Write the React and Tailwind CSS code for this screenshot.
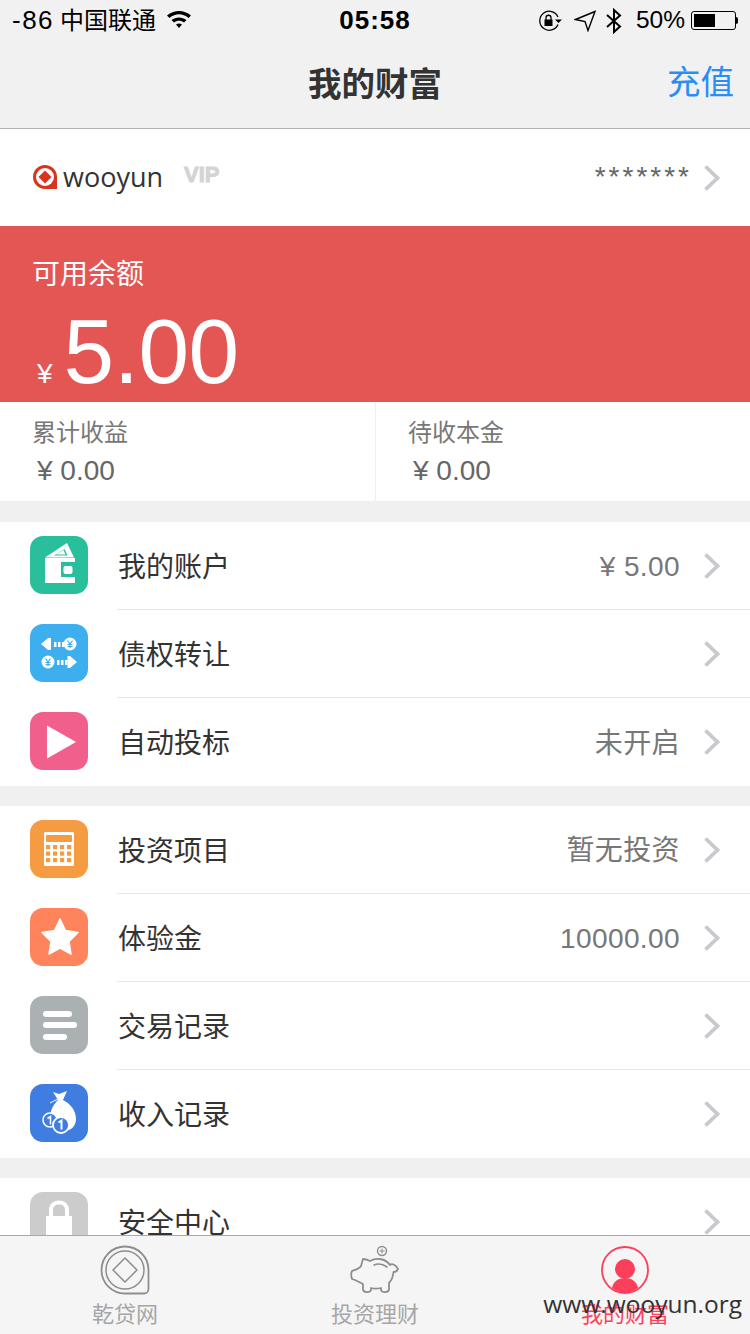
const CJK = '[font-family:"Liberation_Sans","Noto_Sans_CJK_SC",sans-serif]';

function Chevron() {
  return (
    <svg width="18" height="28" viewBox="0 0 18 28" className="shrink-0">
      <path d="M2.5 2.5 L14.5 14 L2.5 25.5" fill="none" stroke="#c8c8cd" strokeWidth="3.8" />
    </svg>
  );
}

function WalletIcon() {
  return (
    <svg width="58" height="58" viewBox="0 0 58 58">
      <path d="M15 21.500 L37 7 L44 21.500 Z" fill="#fff" />
      <path d="M24 19.500 L34.500 13 L37.500 19.500 Z" fill="#2abf9c" />
      <path d="M26 18.500 L33.500 14 L35.500 18.500 Z" fill="#fff" />
      <rect x="15" y="22" width="30" height="25" fill="#fff" />
      <rect x="31" y="26" width="14" height="15" fill="#2abf9c" />
      <rect x="33.500" y="30" width="9" height="8" rx="2" fill="#fff" />
    </svg>
  );
}

function TransferIcon() {
  return (
    <svg width="58" height="58" viewBox="0 0 58 58">
      <path d="M11 20 L18 14 H21 V26 H18 Z" fill="#fff" />
      <rect x="24" y="18" width="2.500" height="5" fill="#fff" />
      <rect x="28" y="18" width="2.500" height="5" fill="#fff" />
      <rect x="32" y="18" width="2.500" height="5" fill="#fff" />
      <circle cx="40" cy="20" r="6.500" fill="#fff" />
      <path d="M37.500 16.500 L40 20 L42.500 16.500 M40 20 V24 M37.500 20.500 H42.500 M37.500 22.500 H42.500" stroke="#3daeee" strokeWidth="1.200" fill="none" />
      <circle cx="18" cy="38" r="6.500" fill="#fff" />
      <path d="M15.500 34.500 L18 38 L20.500 34.500 M18 38 V42 M15.500 38.500 H20.500 M15.500 40.500 H20.500" stroke="#3daeee" strokeWidth="1.200" fill="none" />
      <rect x="27" y="36" width="2.500" height="5" fill="#fff" />
      <rect x="31" y="36" width="2.500" height="5" fill="#fff" />
      <rect x="35" y="36" width="2.500" height="5" fill="#fff" />
      <path d="M47 38 L40 32 H37.500 V44 H40 Z" fill="#fff" />
    </svg>
  );
}

function PlayIcon() {
  return (
    <svg width="58" height="58" viewBox="0 0 58 58">
      <path d="M17 13.500 L46 30 L17 46.500 Z" fill="#fff" />
    </svg>
  );
}

function CalcIcon() {
  const cells = [];
  for (let r = 0; r < 3; r++) {
    for (let c = 0; c < 4; c++) {
      cells.push(<rect key={`${r}-${c}`} x={16 + c * 7} y={25 + r * 6.5} width="4.200" height="4.200" fill="#f59b41" />);
    }
  }
  return (
    <svg width="58" height="58" viewBox="0 0 58 58">
      <rect x="14" y="12" width="30" height="34" rx="1.500" fill="#fff" />
      <rect x="16" y="15" width="26" height="7" rx="1" fill="#f59b41" />
      {cells}
    </svg>
  );
}

function StarIcon() {
  return (
    <svg width="58" height="58" viewBox="0 0 58 58">
      <path d="M30 11 L35.500 22.500 L48 24.500 L39 33.500 L41 46 L30 40 L19 46 L21 33.500 L12 24.500 L24.500 22.500 Z" fill="#fff" stroke="#fff" strokeWidth="1.500" strokeLinejoin="round" />
    </svg>
  );
}

function ListIcon() {
  return (
    <svg width="58" height="58" viewBox="0 0 58 58">
      <rect x="13" y="15" width="29" height="6" rx="3" fill="#fff" />
      <rect x="13" y="26" width="34" height="6" rx="3" fill="#fff" />
      <rect x="13" y="38" width="24" height="6" rx="3" fill="#fff" />
    </svg>
  );
}

function BagIcon() {
  return (
    <svg width="58" height="58" viewBox="0 0 58 58">
      <path d="M23 8 L29 10 L37 7 L33 16 C41 20 46 27 46 35 C46 42 41 47 34 47 L20 34 C20 26 24 20 28 16 Z" fill="#fff" />
      <path d="M20 19 L28 15" stroke="#fff" strokeWidth="1" />
      <circle cx="20" cy="36" r="7" fill="#3f7de0" stroke="#fff" strokeWidth="1.600" />
      <path d="M17.500 34.500 L20.500 32.500 V40.500" stroke="#fff" strokeWidth="1.600" fill="none" />
      <circle cx="31" cy="41" r="8" fill="#3f7de0" stroke="#fff" strokeWidth="1.800" />
      <path d="M28.500 38.500 L31.500 36.500 V45.500" stroke="#fff" strokeWidth="2" fill="none" />
    </svg>
  );
}

function LockIcon() {
  return (
    <svg width="58" height="58" viewBox="0 0 58 58">
      <path d="M21 26 V18 C21 8 37 8 37 18 V26" fill="none" stroke="#fff" strokeWidth="4" />
      <rect x="16" y="24" width="26" height="30" fill="#fff" />
    </svg>
  );
}

function ListRow({ bg, icon, label, value, last }) {
  return (
    <div className="flex h-[88px] items-center pl-[30px]">
      <div className={`mb-[2px] flex h-[58px] w-[58px] shrink-0 items-center justify-center overflow-hidden rounded-[13px] ${bg}`}>
        {icon}
      </div>
      <div className={`ml-[29px] flex h-full flex-1 items-center pr-[29px] ${last ? '' : 'border-b border-[#e8e8e8]'}`}>
        <span className="flex-1 pl-[1px] pt-[4px] text-[28px] text-[#333]">{label}</span>
        {value && <span className="mr-[23px] pt-[3px] text-[28px] tracking-[0.4px] text-[#777]">{value}</span>}
        <Chevron />
      </div>
    </div>
  );
}

function StatusBar() {
  return (
    <div className="flex h-[40px] items-center justify-between pl-[12px] pr-[12px] pt-[1px] text-[25px] text-black">
      <div className="flex w-[260px] items-center">
        <span className="text-[26px] tracking-[1.500px]">-86</span>
        <span className="ml-[6px] text-[24px]">中国联通</span>
        <svg width="26" height="20" viewBox="0 0 26 20" className="ml-[10px] mb-[3px]">
          <path d="M1 6.500 C8 0.500 18 0.500 25 6.500 L22.500 9 C16.500 4 9.500 4 3.500 9 Z" />
          <path d="M5.500 11 C10 7.500 16 7.500 20.500 11 L18 13.500 C15 11 11 11 8 13.500 Z" />
          <path d="M10 15.500 C12 14 14 14 16 15.500 L13 19 Z" />
        </svg>
      </div>
      <span className="text-[26px] font-semibold tracking-[1px]">05:58</span>
      <div className="flex w-[260px] items-center justify-end">
        <svg width="24" height="22" viewBox="0 0 24 22">
          <path d="M20 14.500 A9.500 9.500 0 1 1 20 7" fill="none" stroke="#000" strokeWidth="1.300" />
          <path d="M17 9.500 H24 L20.500 13 Z" />
          <rect x="6.500" y="9.500" width="8" height="6.500" />
          <path d="M8 10 V7.500 C8 4.500 13 4.500 13 7.500 V10" fill="none" stroke="#000" strokeWidth="1.300" />
        </svg>
        <svg width="22" height="22" viewBox="0 0 22 22" className="ml-[12px]">
          <path d="M21 1.500 L1.500 9.500 L11 11.500 L14 20.500 Z" fill="none" stroke="#000" strokeWidth="1.400" strokeLinejoin="miter" />
        </svg>
        <svg width="18" height="26" viewBox="0 0 18 26" className="ml-[9px]">
          <path d="M2 7 L15 18.500 L9 24 V2 L15 7.500 L2 19" fill="none" stroke="#000" strokeWidth="2" />
        </svg>
        <span className="ml-[13px] text-[24.500px]">50%</span>
        <div className="ml-[6px] flex items-center">
          <div className="h-[19px] w-[45px] rounded-[3px] border border-black p-[2px]">
            <div className="h-full w-[21px] bg-black" />
          </div>
          <div className="h-[7px] w-[2px] rounded-r-[2px] bg-black" />
        </div>
      </div>
    </div>
  );
}

function LogoMark() {
  return (
    <svg width="26" height="26" viewBox="0 0 26 26" className="mb-[2px]">
      <path d="M13 1 C6.400 1 1 6.400 1 13 C1 19.600 6.400 25 13 25 H25 V13 C25 6.400 19.600 1 13 1 Z" fill="#d9341f" />
      <circle cx="13" cy="13" r="9" fill="#fff" />
      <path d="M13 6.500 L19.500 13 L13 19.500 L6.500 13 Z" fill="#d9341f" />
    </svg>
  );
}

function TabHomeIcon() {
  return (
    <svg width="50" height="50" viewBox="0 0 50 50">
      <path d="M25 1.500 C12 1.500 1.500 12 1.500 25 C1.500 38 12 48.500 25 48.500 H44 C46.500 48.500 48.500 46.500 48.500 44 V25 C48.500 12 38 1.500 25 1.500 Z" fill="none" stroke="#8e8e8e" strokeWidth="1.800" />
      <circle cx="25" cy="25" r="19" fill="none" stroke="#8e8e8e" strokeWidth="1.500" />
      <path d="M25 13 L37 25 L25 37 L13 25 Z" fill="none" stroke="#8e8e8e" strokeWidth="1.500" strokeLinejoin="round" />
    </svg>
  );
}

function TabPigIcon() {
  return (
    <svg width="50" height="50" viewBox="0 0 50 50">
      <circle cx="32" cy="6" r="4.500" fill="none" stroke="#8e8e8e" strokeWidth="1.400" />
      <path d="M29.500 6 H34.500 M32 3.500 V8.500" stroke="#8e8e8e" strokeWidth="1" />
      <path d="M13 14 C16 14 18 15 20 16 C27 12 36 14 40 20 C42 18 46 20 48 24 C47 27 45 27 43.500 27 C43 32 41 36 39 38 V44 C39 48 32 48 31 45 V43 C27 44 24 44 21 43 V45 C20 48 13 48 13 44 V39 C9 37 6 35 2 34 C1 31 1 28 2 26 C5 25 9 24 11 21 Z" fill="none" stroke="#8e8e8e" strokeWidth="1.800" strokeLinejoin="round" />
      <path d="M24 20 C29 18 33 19 37 22" fill="none" stroke="#8e8e8e" strokeWidth="1.600" strokeLinecap="round" />
    </svg>
  );
}

function TabUserIcon() {
  return (
    <svg width="50" height="50" viewBox="0 0 50 50">
      <circle cx="25" cy="25" r="23" fill="none" stroke="#fd3f5b" strokeWidth="1.800" />
      <circle cx="25" cy="24" r="10" fill="#fd3f5b" />
      <path d="M12 43 C13 37 18 33 25 33 C32 33 37 37 38 43 C31 49 19 49 12 43 Z" fill="#fd3f5b" />
    </svg>
  );
}

export default function App() {
  return (
    <div className={`relative flex h-[1334px] w-[750px] flex-col overflow-hidden bg-[#f0f0f0] ${CJK}`}>
      <div className="shrink-0 border-b border-[#b2b2b2] bg-[#f1f1f1]">
        <StatusBar />
        <div className="relative flex h-[88px] items-center justify-center">
          <span className="pt-[2px] text-[33.500px] font-semibold text-[#333]">我的财富</span>
          <span className="absolute right-[16px] top-[21px] text-[33.500px] leading-[44px] text-[#2a8cf5]">充值</span>
        </div>
      </div>

      <div className="min-h-0 flex-1 overflow-hidden">
        {/* Account */}
        <div className="flex h-[97px] items-center bg-white pl-[32px] pr-[29px]">
          <LogoMark />
          <span className="ml-[5px] text-[27px] text-[#333] [font-family:'Open_Sans',sans-serif]">wooyun</span>
          <span className="ml-[21px] mb-[6px] text-[22px] font-bold leading-none text-[#d4d4d4] [-webkit-text-stroke:1px_#d4d4d4]">VIP</span>
          <span className="ml-auto mr-[11px] mb-[2px] text-[28px] tracking-[3px] text-[#666]">*******</span>
          <Chevron />
        </div>

        {/* Balance */}
        <div className="h-[176px] overflow-hidden bg-[#e35654] pl-[32px] text-white">
          <div className="pt-[31px] text-[28px] leading-[36px]">可用余额</div>
          <div className="mt-[4px] flex items-baseline">
            <span className="ml-[5px] text-[28px]">¥</span>
            <span className="ml-[11px] text-[91px] leading-[110px] tracking-[-0.500px]">5.00</span>
          </div>
        </div>

        {/* Totals */}
        <div className="flex h-[99px] bg-white">
          <div className="w-[376px] border-r border-[#efefef] pl-[32px] pt-[13px]">
            <div className="text-[24px] leading-[36px] text-[#777]">累计收益</div>
            <div className="mt-[1px] pl-[5px] text-[28px] leading-[38px] text-[#666]">¥ 0.00</div>
          </div>
          <div className="flex-1 pl-[32px] pt-[13px]">
            <div className="text-[24px] leading-[36px] text-[#777]">待收本金</div>
            <div className="mt-[1px] pl-[5px] text-[28px] leading-[38px] text-[#666]">¥ 0.00</div>
          </div>
        </div>

        <div className="mt-[21px] bg-white">
          <ListRow bg="bg-[#2abf9c]" icon={<WalletIcon />} label="我的账户" value="¥ 5.00" />
          <ListRow bg="bg-[#3daeee]" icon={<TransferIcon />} label="债权转让" />
          <ListRow bg="bg-[#f15f8c]" icon={<PlayIcon />} label="自动投标" value="未开启" last />
        </div>

        <div className="mt-[20px] bg-white">
          <ListRow bg="bg-[#f59b41]" icon={<CalcIcon />} label="投资项目" value="暂无投资" />
          <ListRow bg="bg-[#ff845c]" icon={<StarIcon />} label="体验金" value="10000.00" />
          <ListRow bg="bg-[#abb1b3]" icon={<ListIcon />} label="交易记录" />
          <ListRow bg="bg-[#3f7de0]" icon={<BagIcon />} label="收入记录" last />
        </div>

        <div className="mt-[20px] bg-white">
          <ListRow bg="bg-[#cccccc]" icon={<LockIcon />} label="安全中心" last />
        </div>
      </div>

      {/* Tab bar */}
      <div className="grid h-[99px] shrink-0 grid-cols-3 border-t border-[#a9a9a9] bg-[#f5f5f5]">
        <div className="flex flex-col items-center pt-[9px]">
          <TabHomeIcon />
          <span className="mt-[5px] text-[22px] leading-[30px] text-[#a6a6a6]">乾贷网</span>
        </div>
        <div className="flex flex-col items-center pt-[9px]">
          <TabPigIcon />
          <span className="mt-[5px] text-[22px] leading-[30px] text-[#a6a6a6]">投资理财</span>
        </div>
        <div className="flex flex-col items-center pt-[9px]">
          <TabUserIcon />
          <span className="mt-[5px] text-[22px] leading-[30px] text-[#fd3f5b]">我的财富</span>
        </div>
      </div>

      {/* watermark */}
      <span className="absolute right-[8px] top-[1287px] text-[24.500px] leading-[34px] text-[#333] [font-family:'Open_Sans',sans-serif]">www.wooyun.org</span>
    </div>
  );
}
